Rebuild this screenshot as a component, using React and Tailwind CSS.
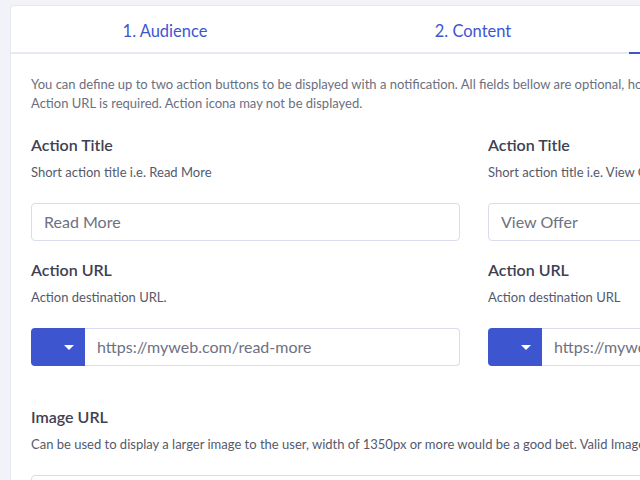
import React from "react";

function Field({ title, desc, children }) {
  return (
    <div className="flex flex-col">
      <div className="text-[16px] leading-5 font-semibold text-[#3d4152]">{title}</div>
      <div className="mt-[7px] text-[13px] leading-5 text-[#555a6b] whitespace-nowrap">{desc}</div>
      <div className="mt-[21px]">{children}</div>
    </div>
  );
}

function TextInput({ value }) {
  return (
    <div className="h-[38px] w-full rounded-[4px] border border-[#d9dcec] bg-white px-3 flex items-center text-[16px] text-[#6e7183] whitespace-nowrap overflow-hidden">
      {value}
    </div>
  );
}

function UrlInput({ value }) {
  return (
    <div className="flex h-[38px] w-full">
      <button className="w-[54px] shrink-0 rounded-l-[4px] bg-[#3d56d0] flex items-center justify-end pr-[11px]">
        <span className="block w-0 h-0 border-l-[5px] border-r-[5px] border-t-[5px] border-l-transparent border-r-transparent border-t-white" />
      </button>
      <div className="flex-1 rounded-r-[4px] border border-l-0 border-[#d9dcec] bg-white px-3 flex items-center text-[16px] text-[#6e7183] whitespace-nowrap overflow-hidden">
        {value}
      </div>
    </div>
  );
}

export default function App() {
  return (
    <div
      className="h-[480px] w-[640px] overflow-hidden bg-[#f2f3f8] pl-[10px] pt-[5px]"
      style={{ fontFamily: "Lato, 'Noto Sans', sans-serif" }}
    >
      <div className="w-[1000px] rounded-[4px] border border-[#e6e7f1] bg-white">
        <div className="flex h-[48px] border-b-2 border-[#e8e9f2]">
          <div className="w-[308px] pt-[4px] flex items-center justify-center text-[16.5px] text-[#3d56d0]">1. Audience</div>
          <div className="w-[308px] pt-[4px] flex items-center justify-center text-[16.5px] text-[#3d56d0]">2. Content</div>
          <div className="ml-[2px] w-[308px] pt-[4px] -mb-[2px] border-b-2 border-[#3d56d0] flex items-center justify-center text-[16.5px] text-[#3d56d0]">3. Actions</div>
        </div>
        <div className="px-5 pt-[21px]">
          <p className="text-[13px] leading-[19px] text-[#6b6f80] w-[680px]">
            You can define up to two action buttons to be displayed with a notification. All fields bellow are optional, however Action URL is required. Action icona may not be displayed.
          </p>
          <div className="mt-[22px] grid grid-cols-[429px_429px] gap-x-[28px]">
            <div className="flex flex-col gap-[19px]">
              <Field title="Action Title" desc="Short action title i.e. Read More">
                <TextInput value="Read More" />
              </Field>
              <Field title="Action URL" desc="Action destination URL.">
                <UrlInput value="https://myweb.com/read-more" />
              </Field>
            </div>
            <div className="flex flex-col gap-[19px]">
              <Field title="Action Title" desc="Short action title i.e. View Offer">
                <TextInput value="View Offer" />
              </Field>
              <Field title="Action URL" desc="Action destination URL">
                <UrlInput value="https://myweb.com/view-offer" />
              </Field>
            </div>
          </div>
          <div className="mt-[41px]">
            <Field title="Image URL" desc="Can be used to display a larger image to the user, width of 1350px or more would be a good bet. Valid Image formats are JPG and PNG.">
              <TextInput value="" />
            </Field>
          </div>
        </div>
      </div>
    </div>
  );
}
